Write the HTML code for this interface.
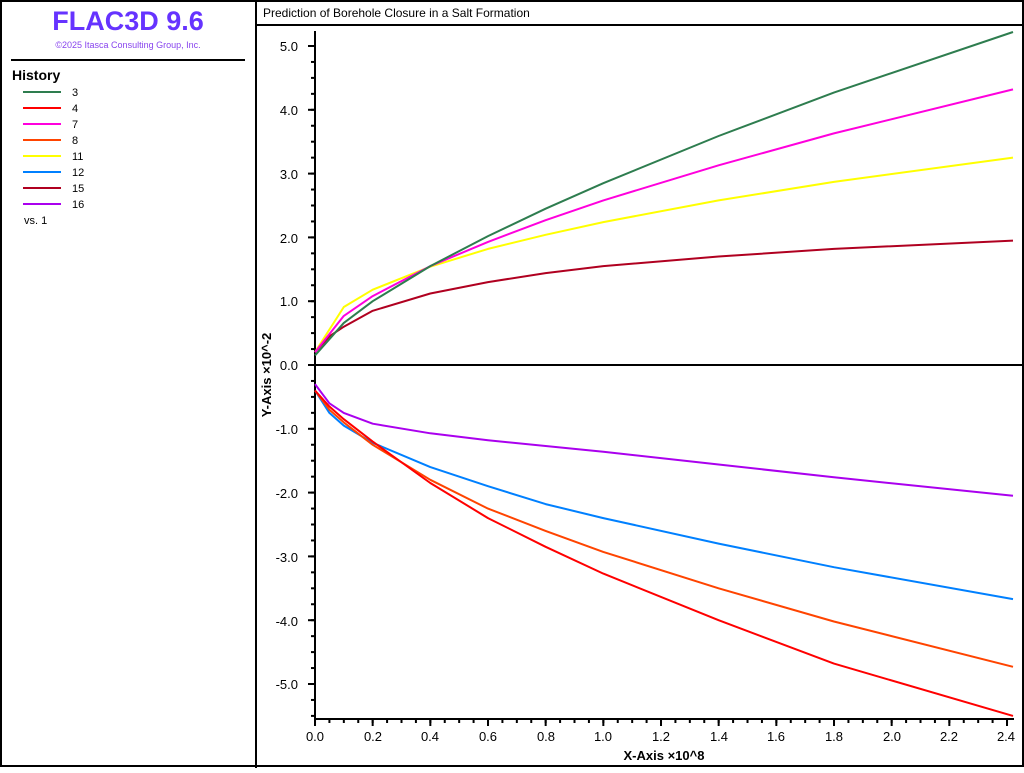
<!DOCTYPE html>
<html><head><meta charset="utf-8"><style>
body{margin:0;width:1024px;height:768px;overflow:hidden;background:#fff;font-family:"Liberation Sans",sans-serif}
svg text{font-family:"Liberation Sans",sans-serif}
</style></head><body>
<svg width="1024" height="768" viewBox="0 0 1024 768" xmlns="http://www.w3.org/2000/svg">
<defs>
<pattern id="xm" patternUnits="userSpaceOnUse" x="314" y="0" width="14.417" height="768"><rect x="0" y="719" width="2" height="4" fill="#000"/></pattern>
<pattern id="xM" patternUnits="userSpaceOnUse" x="314" y="0" width="57.667" height="768"><rect x="0" y="719" width="2" height="7" fill="#000"/></pattern>
<pattern id="ym" patternUnits="userSpaceOnUse" x="0" y="364" width="1024" height="15.95"><rect x="311" y="0" width="4" height="2" fill="#000"/></pattern>
<pattern id="yM" patternUnits="userSpaceOnUse" x="0" y="364" width="1024" height="63.8"><rect x="308" y="0" width="7" height="2" fill="#000"/></pattern>
</defs>
<!-- borders -->
<rect x="1" y="1" width="1022" height="765" fill="none" stroke="#000" stroke-width="2"/>
<line x1="256" y1="0" x2="256" y2="768" stroke="#000" stroke-width="2"/>
<line x1="256" y1="25" x2="1024" y2="25" stroke="#000" stroke-width="2"/>
<line x1="11" y1="60" x2="245" y2="60" stroke="#000" stroke-width="2"/>
<!-- left panel -->
<text x="128" y="30" text-anchor="middle" font-size="27" font-weight="bold" fill="#6633ff">FLAC3D 9.6</text>
<text x="128" y="48" text-anchor="middle" font-size="9" fill="#8844ee">©2025 Itasca Consulting Group, Inc.</text>
<text x="12" y="80" font-size="14" font-weight="bold" fill="#000">History</text>
<g stroke-width="2">
<line x1="23" y1="92" x2="61" y2="92" stroke="#2e7d4f"/>
<line x1="23" y1="108" x2="61" y2="108" stroke="#ff0000"/>
<line x1="23" y1="124" x2="61" y2="124" stroke="#ff00dd"/>
<line x1="23" y1="140" x2="61" y2="140" stroke="#ff4400"/>
<line x1="23" y1="156" x2="61" y2="156" stroke="#ffff00"/>
<line x1="23" y1="172" x2="61" y2="172" stroke="#0080ff"/>
<line x1="23" y1="188" x2="61" y2="188" stroke="#b00020"/>
<line x1="23" y1="204" x2="61" y2="204" stroke="#aa00ee"/>
</g>
<g font-size="11" fill="#000">
<text x="72" y="96">3</text><text x="72" y="112">4</text><text x="72" y="128">7</text><text x="72" y="144">8</text>
<text x="72" y="160">11</text><text x="72" y="176">12</text><text x="72" y="192">15</text><text x="72" y="208">16</text>
<text x="24" y="224">vs. 1</text>
</g>
<!-- title -->
<text x="263" y="17" font-size="12" fill="#000">Prediction of Borehole Closure in a Salt Formation</text>
<!-- axes -->
<rect x="314" y="31" width="2" height="689" fill="#000"/>
<rect x="314" y="718" width="700" height="2" fill="#000"/>
<line x1="315" y1="365" x2="1023" y2="365" stroke="#000" stroke-width="2"/>
<rect x="310" y="32" width="6" height="686" fill="url(#ym)"/>
<rect x="306" y="32" width="10" height="686" fill="url(#yM)"/>
<rect x="314" y="719" width="700" height="8" fill="url(#xm)"/>
<rect x="314" y="719" width="700" height="8" fill="url(#xM)"/>
<g font-size="13" fill="#000" text-anchor="end">
<text x="298" y="51">5.0</text><text x="298" y="115">4.0</text><text x="298" y="179">3.0</text><text x="298" y="243">2.0</text>
<text x="298" y="306">1.0</text><text x="298" y="370">0.0</text><text x="298" y="434">-1.0</text><text x="298" y="498">-2.0</text>
<text x="298" y="562">-3.0</text><text x="298" y="626">-4.0</text><text x="298" y="689">-5.0</text>
</g>
<g font-size="13" fill="#000" text-anchor="middle">
<text x="315" y="741">0.0</text><text x="373" y="741">0.2</text><text x="430" y="741">0.4</text><text x="488" y="741">0.6</text>
<text x="546" y="741">0.8</text><text x="603" y="741">1.0</text><text x="661" y="741">1.2</text><text x="719" y="741">1.4</text>
<text x="776" y="741">1.6</text><text x="834" y="741">1.8</text><text x="892" y="741">2.0</text><text x="949" y="741">2.2</text>
<text x="1006" y="741">2.4</text>
</g>
<text x="664" y="760" text-anchor="middle" font-size="13" font-weight="bold">X-Axis ×10^8</text>
<text transform="translate(271,375) rotate(-90)" text-anchor="middle" font-size="13" font-weight="bold">Y-Axis ×10^-2</text>
<!-- curves -->
<g fill="none" stroke-width="2" stroke-linejoin="round">
<polyline stroke="#b00020" points="315,352.2 329.4,336.3 343.8,326.7 372.7,310.8 430.3,293.5 488,282.1 545.6,273.1 603.3,266.1 718.6,256.5 833.9,248.9 1013,240.6"/>
<polyline stroke="#ffff00" points="315,352.2 343.8,307 372.7,289.7 430.3,266.7 488,248.9 545.6,234.8 603.3,222.1 718.6,200.4 833.9,181.9 1013,157.6"/>
<polyline stroke="#ff00dd" points="315,352.2 343.8,315.9 372.7,296.1 430.3,266.1 488,241.9 545.6,220.2 603.3,200.4 718.6,165.3 833.9,133.4 1013,89.4"/>
<polyline stroke="#2e7d4f" points="315,355.4 343.8,322.9 372.7,301.2 430.3,266.1 488,236.1 545.6,208.7 603.3,183.2 718.6,136 833.9,92.6 1013,32"/>
<polyline stroke="#aa00ee" points="315,384.1 329.4,403.3 343.8,412.9 372.7,423.7 430.3,433.3 488,440.3 603.3,451.8 718.6,464.5 833.9,477.3 1013,495.8"/>
<polyline stroke="#0080ff" points="315,390.5 329.4,412.9 343.8,425.6 372.7,442.8 430.3,467.1 488,486.2 545.6,504.1 603.3,518.1 718.6,543.6 833.9,567.2 1013,599.1"/>
<polyline stroke="#ff4400" points="315,390.5 329.4,409.7 343.8,422.4 372.7,444.8 430.3,479.8 488,508.6 545.6,530.9 603.3,551.9 718.6,588.3 833.9,621.5 1013,666.8"/>
<polyline stroke="#ff0000" points="315,390.5 329.4,406.5 343.8,419.2 372.7,441.6 430.3,483 488,518.1 545.6,546.8 603.3,573.6 718.6,620.2 833.9,663.6 1013,715.9"/>
</g>
</svg>
</body></html>
